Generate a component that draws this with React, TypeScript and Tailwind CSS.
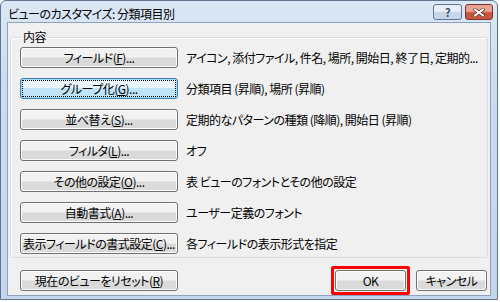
import React from 'react';

interface Row {
  label: React.ReactNode;
  desc: string;
  focused?: boolean;
}

const U = ({ children }: { children: React.ReactNode }) => <span className="underline underline-offset-[1px]">{children}</span>;

const rows: Row[] = [
  { label: <>フィールド(<U>F</U>)...</>, desc: 'アイコン, 添付ファイル, 件名, 場所, 開始日, 終了日, 定期的...' },
  { label: <>グループ化(<U>G</U>)...</>, desc: '分類項目 (昇順), 場所 (昇順)', focused: true },
  { label: <>並べ替え(<U>S</U>)...</>, desc: '定期的なパターンの種類 (降順), 開始日 (昇順)' },
  { label: <>フィルタ(<U>L</U>)...</>, desc: 'オフ' },
  { label: <>その他の設定(<U>O</U>)...</>, desc: '表 ビューのフォントとその他の設定' },
  { label: <>自動書式(<U>A</U>)...</>, desc: 'ユーザー定義のフォント' },
  { label: <>表示フィールドの書式設定(<U>C</U>)...</>, desc: '各フィールドの表示形式を指定' },
];

function WinButton({ children, focused, className }: { children: React.ReactNode; focused?: boolean; className?: string }) {
  return (
    <div
      className={
        'h-[21px] rounded-[3px] border flex items-center justify-center p-[2px] ' +
        (focused
          ? 'border-[#3c7fb1] bg-gradient-to-b from-[#eaf6fd] from-50% to-[#bfe4f8] to-50% shadow-[inset_0_0_0_1px_#a8dcf7] '
          : 'border-[#707070] bg-gradient-to-b from-[#f2f2f2] from-45% to-[#dadada] to-55% shadow-[inset_0_0_0_1px_#fcfcfc] ') +
        (className ?? '')
      }
    >
      <div className={'w-full h-full flex items-center justify-center whitespace-nowrap ' + (focused ? 'outline-1 outline-dotted outline-black' : '')}>
        {children}
      </div>
    </div>
  );
}

export default function App() {
  return (
    <div
      className="w-[500px] h-[302px] bg-white text-[12px] text-black leading-none tracking-[-0.5px] [font-feature-settings:'palt']"
      style={{ fontFamily: '"Noto Sans CJK JP", "Noto Sans", sans-serif' }}
    >
      <div className="w-[498px] h-[300px] rounded-t-[6px] border border-[#5f7590] bg-gradient-to-b from-[#dbe7f4] via-[#cbdcef] via-30% to-[#c3d6ec] flex flex-col">
        {/* title bar */}
        <div className="h-[27px] flex items-start justify-between">
          <div className="pl-[7px] pt-[7px] text-[12px] text-black">ビューのカスタマイズ: 分類項目別</div>
          <div className="flex gap-[3px] pt-[3px] pr-[4px]">
            <div className="w-[29px] h-[16px] rounded-[3px] border border-[#5f7590] bg-gradient-to-b from-[#e6eef8] from-45% to-[#c6d5e9] to-55% flex items-center justify-center">
              <span className="text-[11px] font-bold text-[#3b4c63] leading-none">?</span>
            </div>
            <div className="w-[28px] h-[16px] rounded-[3px] border border-[#7a3427] bg-gradient-to-b from-[#e8a493] from-45% to-[#c8553d] to-55% flex items-center justify-center">
              <svg width="12" height="9" viewBox="0 0 12 9">
                <path d="M2 1.5 L10 7.5 M10 1.5 L2 7.5" stroke="#4d1e14" strokeWidth="3.2" strokeLinecap="square" />
                <path d="M2 1.5 L10 7.5 M10 1.5 L2 7.5" stroke="#ffffff" strokeWidth="2" strokeLinecap="square" />
              </svg>
            </div>
          </div>
        </div>
        {/* client area */}
        <div className="flex-1 mx-[6px] mb-[3px] border border-[#8da2bc] bg-[#f0f0f0] flex flex-col px-[2px]">
          <fieldset className="mt-[8px] border border-[#d5dfe5] rounded-[3px] px-[9px] pt-[4px] pb-[3px] mx-0 shadow-[inset_1px_1px_0_#fff]">
            <legend className="px-[2px] ml-[1px] text-[12px]">内容</legend>
            <div className="flex flex-col gap-[10px]">
              {rows.map((r, i) => (
                <div key={i} className="flex items-center">
                  <WinButton focused={r.focused} className="w-[158px] shrink-0">
                    {r.label}
                  </WinButton>
                  <span className="ml-[8px] whitespace-nowrap">{r.desc}</span>
                </div>
              ))}
            </div>
          </fieldset>
          <div className="flex items-center justify-between mt-[8px] pl-[10px] pr-[1px]">
            <WinButton className="w-[158px]">
              現在のビューをリセット(<U>R</U>)
            </WinButton>
            <div className="flex items-center gap-[6px]">
              <div className="border-[3px] border-[#ff0000] rounded-[2px] p-[1px]">
                <WinButton className="w-[71px]">OK</WinButton>
              </div>
              <WinButton className="w-[71px]">キャンセル</WinButton>
            </div>
          </div>
        </div>
      </div>
    </div>
  );
}
